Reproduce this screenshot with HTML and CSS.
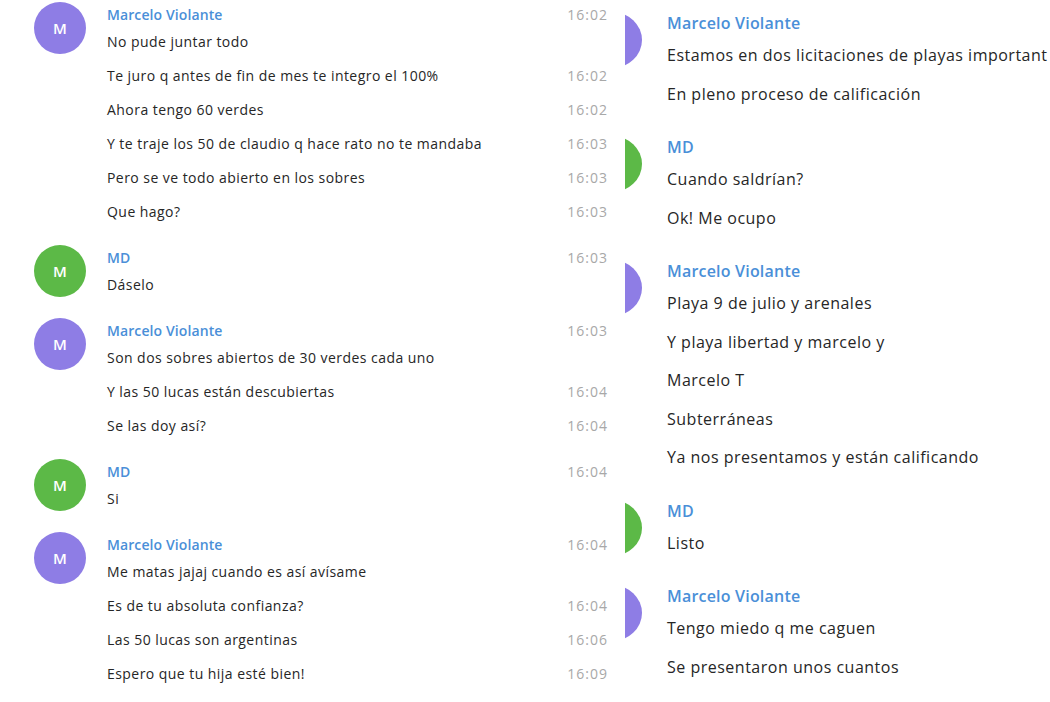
FILE: index.html
```html
<!DOCTYPE html>
<html lang="es">
<head>
<meta charset="utf-8">
<link rel="stylesheet" href="styles.css">
</head>
<body>
<div class="page">
  <section class="left">
    <div class="group">
      <div class="av-col"><div class="avatar purple">M</div></div>
      <div class="msgs">
        <div class="row name-row"><span class="name">Marcelo Violante</span><span class="time">16:02</span></div>
        <div class="row"><span class="text">No pude juntar todo</span><span class="time"></span></div>
        <div class="row"><span class="text">Te juro q antes de fin de mes te integro el 100%</span><span class="time">16:02</span></div>
        <div class="row"><span class="text">Ahora tengo 60 verdes</span><span class="time">16:02</span></div>
        <div class="row"><span class="text">Y te traje los 50 de claudio q hace rato no te mandaba</span><span class="time">16:03</span></div>
        <div class="row"><span class="text">Pero se ve todo abierto en los sobres</span><span class="time">16:03</span></div>
        <div class="row"><span class="text">Que hago?</span><span class="time">16:03</span></div>
      </div>
    </div>
    <div class="group">
      <div class="av-col"><div class="avatar green">M</div></div>
      <div class="msgs">
        <div class="row name-row"><span class="name">MD</span><span class="time">16:03</span></div>
        <div class="row"><span class="text">Dáselo</span><span class="time"></span></div>
      </div>
    </div>
    <div class="group">
      <div class="av-col"><div class="avatar purple">M</div></div>
      <div class="msgs">
        <div class="row name-row"><span class="name">Marcelo Violante</span><span class="time">16:03</span></div>
        <div class="row"><span class="text">Son dos sobres abiertos de 30 verdes cada uno</span><span class="time"></span></div>
        <div class="row"><span class="text">Y las 50 lucas están descubiertas</span><span class="time">16:04</span></div>
        <div class="row"><span class="text">Se las doy así?</span><span class="time">16:04</span></div>
      </div>
    </div>
    <div class="group">
      <div class="av-col"><div class="avatar green">M</div></div>
      <div class="msgs">
        <div class="row name-row"><span class="name">MD</span><span class="time">16:04</span></div>
        <div class="row"><span class="text">Si</span><span class="time"></span></div>
      </div>
    </div>
    <div class="group">
      <div class="av-col"><div class="avatar purple">M</div></div>
      <div class="msgs">
        <div class="row name-row"><span class="name">Marcelo Violante</span><span class="time">16:04</span></div>
        <div class="row"><span class="text">Me matas jajaj cuando es así avísame</span><span class="time"></span></div>
        <div class="row"><span class="text">Es de tu absoluta confianza?</span><span class="time">16:04</span></div>
        <div class="row"><span class="text">Las 50 lucas son argentinas</span><span class="time">16:06</span></div>
        <div class="row"><span class="text">Espero que tu hija esté bien!</span><span class="time">16:09</span></div>
      </div>
    </div>
  </section>
  <section class="right">
    <div class="rgroup">
      <div class="clip"><div class="disc purple"></div></div>
      <div class="rmsgs">
        <div class="rname">Marcelo Violante</div>
        <div class="rrow">Estamos en dos licitaciones de playas important</div>
        <div class="rrow">En pleno proceso de calificación</div>
      </div>
    </div>
    <div class="rgroup">
      <div class="clip"><div class="disc green"></div></div>
      <div class="rmsgs">
        <div class="rname">MD</div>
        <div class="rrow">Cuando saldrían?</div>
        <div class="rrow">Ok! Me ocupo</div>
      </div>
    </div>
    <div class="rgroup">
      <div class="clip"><div class="disc purple"></div></div>
      <div class="rmsgs">
        <div class="rname">Marcelo Violante</div>
        <div class="rrow">Playa 9 de julio y arenales</div>
        <div class="rrow">Y playa libertad y marcelo y</div>
        <div class="rrow">Marcelo T</div>
        <div class="rrow">Subterráneas</div>
        <div class="rrow">Ya nos presentamos y están calificando</div>
      </div>
    </div>
    <div class="rgroup">
      <div class="clip"><div class="disc green"></div></div>
      <div class="rmsgs">
        <div class="rname">MD</div>
        <div class="rrow">Listo</div>
      </div>
    </div>
    <div class="rgroup">
      <div class="clip"><div class="disc purple"></div></div>
      <div class="rmsgs">
        <div class="rname">Marcelo Violante</div>
        <div class="rrow">Tengo miedo q me caguen</div>
        <div class="rrow">Se presentaron unos cuantos</div>
      </div>
    </div>
  </section>
</div>
</body>
</html>
```
FILE: styles.css
```css
html, body {
  margin: 0;
  padding: 0;
  background: #ffffff;
}
.page {
  display: flex;
  width: 1050px;
  height: 702px;
  overflow: hidden;
}
.left {
  width: 625px;
  flex: none;
  box-sizing: border-box;
  padding: 5px 17px 0 0;
  display: flex;
  flex-direction: column;
  gap: 19px;
  font-family: "Open Sans", "Liberation Sans", sans-serif;
  font-size: 14px;
  color: #262626;
}
.group {
  display: flex;
}
.av-col {
  width: 107px;
  flex: none;
  box-sizing: border-box;
  padding-left: 34px;
}
.avatar {
  width: 52px;
  height: 52px;
  border-radius: 50%;
  color: #ffffff;
  font-weight: 600;
  font-size: 15px;
  display: flex;
  align-items: center;
  justify-content: center;
  margin-top: -3px;
}
.purple { background: #8e7de5; }
.green { background: #5cb947; }
.msgs {
  flex: 1;
  display: flex;
  flex-direction: column;
}
.row {
  display: flex;
  justify-content: space-between;
  height: 34px;
  line-height: 34px;
}
.row.name-row {
  height: 20px;
  line-height: 20px;
}
.name {
  color: #4a8fd8;
  font-weight: 600;
  letter-spacing: 0.1px;
}
.text {
  font-weight: 500;
  letter-spacing: 0.45px;
}
.time {
  color: #a8a8a8;
  font-size: 14px;
  letter-spacing: 1px;
  font-weight: 400;
}
.right {
  flex: 1;
  min-width: 0;
  overflow: hidden;
  display: flex;
  flex-direction: column;
  gap: 21px;
  padding-top: 10px;
  font-family: "Open Sans", "DejaVu Sans", sans-serif;
  font-size: 16px;
  color: #262626;
}
.rgroup {
  display: flex;
  gap: 25px;
}
.clip {
  width: 17px;
  height: 56px;
  flex: none;
  overflow: hidden;
  margin-top: 2px;
  display: flex;
  justify-content: flex-end;
}
.disc {
  width: 60px;
  height: 56px;
  flex: none;
  border-radius: 50%;
}
.rmsgs {
  display: flex;
  flex-direction: column;
  white-space: nowrap;
}
.rname {
  height: 26px;
  line-height: 26px;
  color: #4a8fd8;
  font-weight: 600;
  letter-spacing: 0.2px;
}
.rrow {
  height: 38.5px;
  line-height: 38.5px;
  letter-spacing: 0.5px;
}
```
